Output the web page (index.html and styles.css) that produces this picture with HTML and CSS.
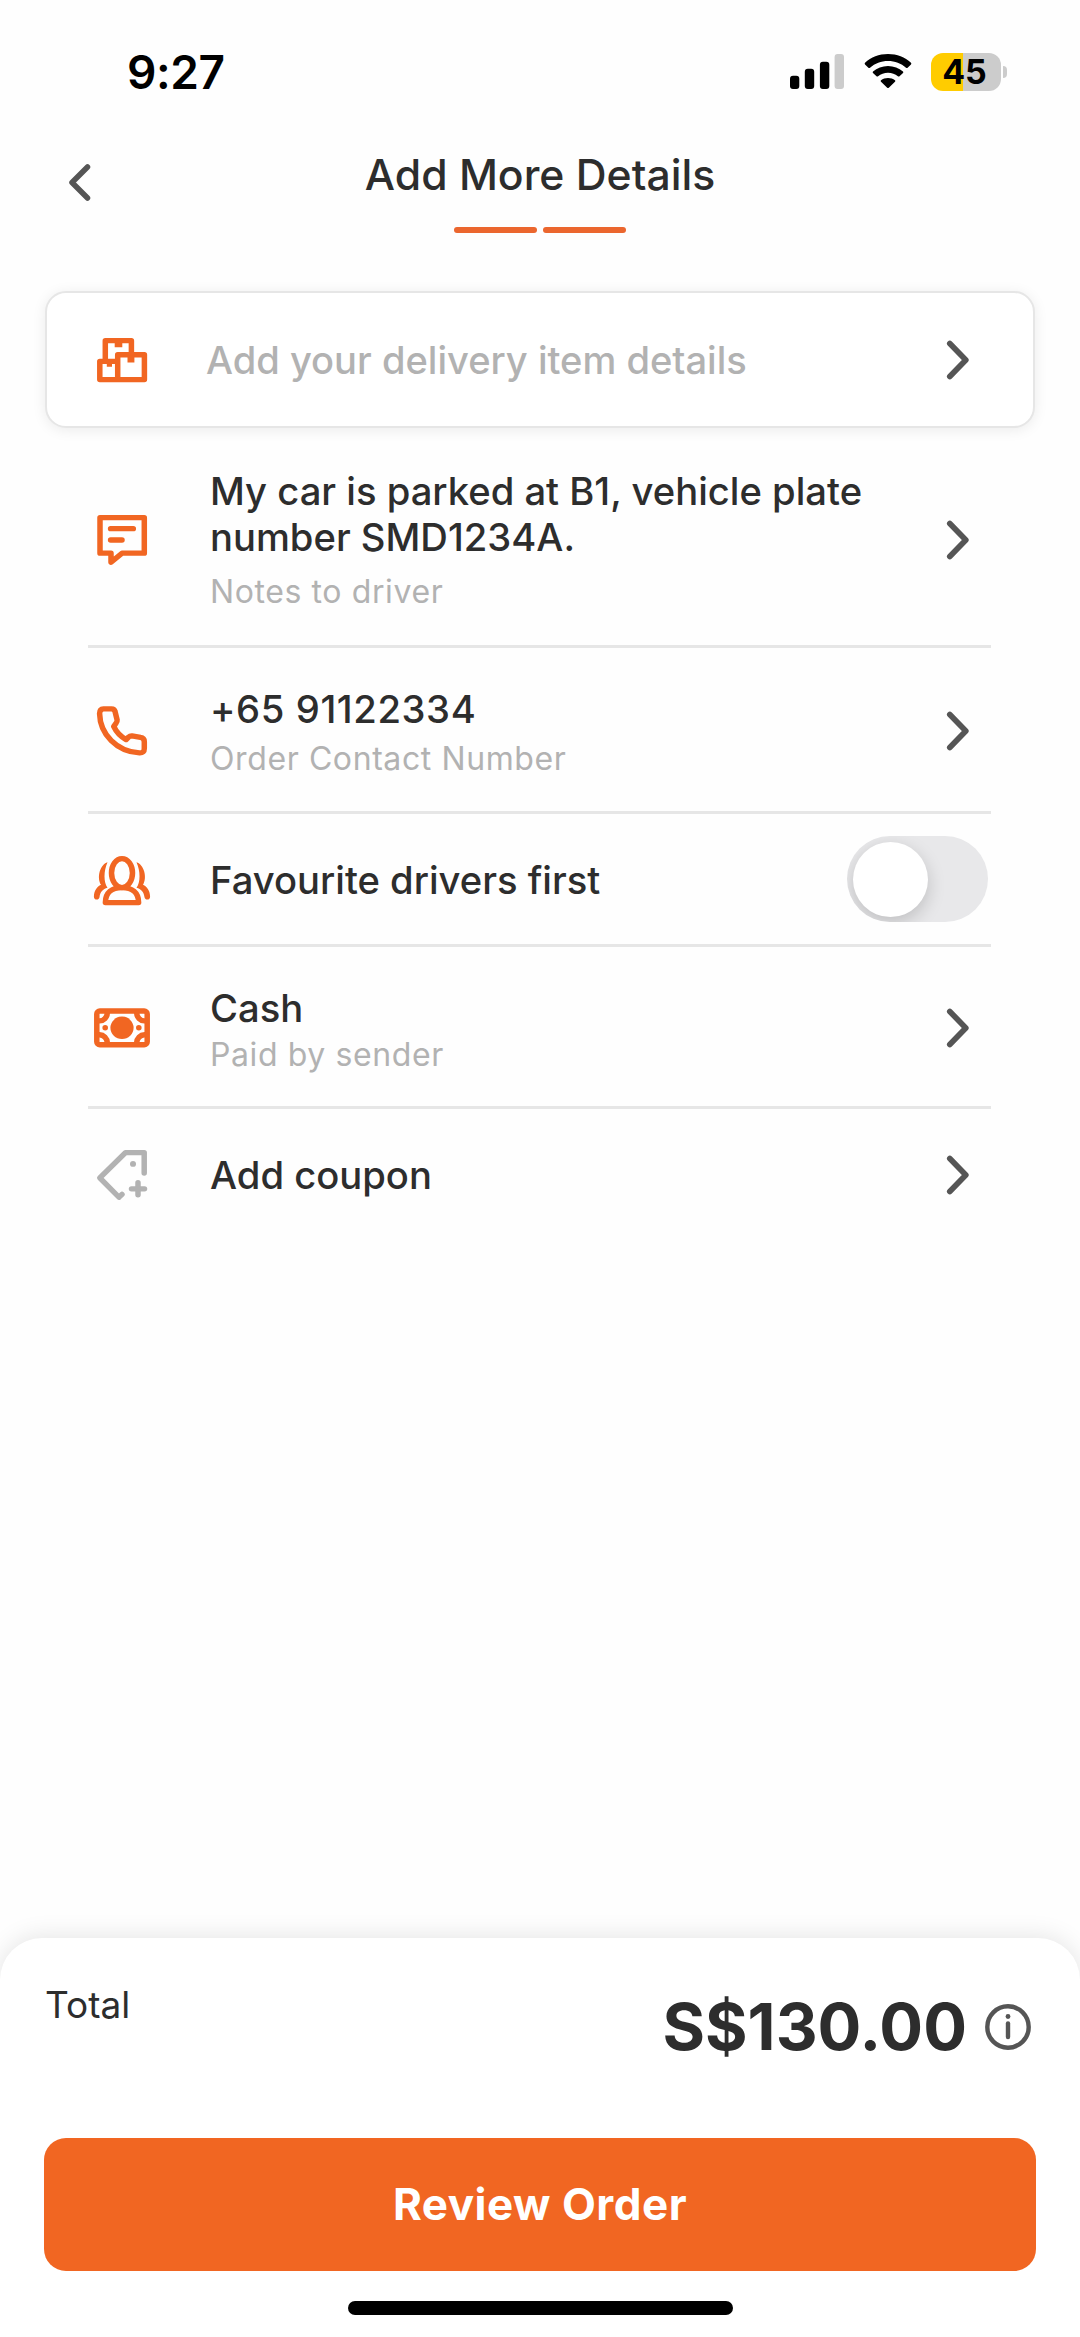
FILE: index.html
```html
<!DOCTYPE html>
<html lang="en">
<head>
<meta charset="utf-8">
<title>Add More Details</title>
<link rel="stylesheet" href="styles.css">
</head>
<body>
<div class="screen">
  <div class="status-bar">
    <span class="clock">9:27</span>
    <div class="status-icons">
      <svg class="signal" viewBox="0 0 54 35"><rect x="0" y="21.700" width="9.3" height="13.300" rx="3"/><rect x="14.8" y="14.700" width="9.4" height="20.300" rx="3"/><rect x="29.9" y="7.700" width="9.4" height="27.300" rx="3"/><rect class="dim" x="44.6" y="0" width="9.4" height="35" rx="3"/></svg>
      <svg class="wifi" viewBox="0 0 48 37" preserveAspectRatio="none"><path d="M24 0C15 0 7 3.4 1 9.300Q.3 10.200 1 11L4.400 14.500Q5.200 15.100 6 14.500C11 9.800 17 7.300 24 7.300S37 9.800 42 14.500Q42.800 15.100 43.600 14.500L47 11Q47.700 10.200 47 9.300C41 3.400 33 0 24 0Z"/><path d="M24 12.700C18.300 12.700 13 14.900 9 18.600Q8.300 19.400 9 20.200L12.500 23.600Q13.300 24.200 14.100 23.600C16.800 21.100 20.200 19.800 24 19.800S31.200 21.100 33.900 23.600Q34.700 24.200 35.500 23.600L39 20.200Q39.700 19.400 39 18.600C35 14.900 29.700 12.700 24 12.700Z"/><path d="M24 25.300C21.300 25.300 18.900 26.200 17 27.800Q16.200 28.600 17 29.400L23.200 35.700Q24 36.400 24.800 35.700L31 29.400Q31.800 28.600 31 27.800C29.100 26.200 26.700 25.300 24 25.300Z"/></svg>
      <div class="battery"><span>45</span></div>
      <div class="battery-tip"></div>
    </div>
  </div>

  <header class="header">
    <svg class="back" viewBox="0 0 22 37"><path d="M18.500 3 3 18.500 18.500 34"/></svg>
    <div class="heading">
      <h1>Add More Details</h1>
      <div class="steps"><i></i><i></i></div>
    </div>
  </header>

  <section class="card">
    <svg class="icon" viewBox="0 0 60 60" preserveAspectRatio="none"><path d="M13.300 31V10H39.400V24M24 31.400H7.800V50.300H52.400V24.600H25.700V50"/><path class="solid" d="M22.700 10H30.300V16.700H22.700ZM35.500 25H42.400V32.500H35.500ZM14.800 31H20V37H14.800Z"/></svg>
    <span class="prompt">Add your delivery item details</span>
    <svg class="chevron" viewBox="0 0 24 40"><path d="M3.800 3.500 19.800 20 3.800 36.500"/></svg>
  </section>

  <main class="list">
    <div class="row notes">
      <svg class="icon" viewBox="0 0 60 60" preserveAspectRatio="none"><path d="M8 6.800H52.300V43.600H30L19 53V43.600H8ZM18.600 18.300H41.300M18.600 30H30"/></svg>
      <div class="text"><p>My car is parked at B1, vehicle plate<br>number SMD1234A.</p><small>Notes to driver</small></div>
      <svg class="chevron" viewBox="0 0 24 40"><path d="M3.800 3.500 19.800 20 3.800 36.500"/></svg>
    </div>
    <div class="row phone">
      <svg class="icon" viewBox="0 0 60 60" preserveAspectRatio="none"><path d="M7.600 12Q7.600 7.400 11.500 7.200H19.500Q22.500 7.200 23 9.800L25.100 18.500Q25.300 20.500 24 22L21.700 25.300C24.500 31.500 29 36 34.100 38.900L36.500 36.300Q38 34.900 40 35.100L48.500 36.700Q52.300 37.300 52.300 41V48Q52.300 52.900 47.500 52.700C25 51.500 8 33.500 7.600 12Z"/></svg>
      <div class="text"><p>+65 91122334</p><small>Order Contact Number</small></div>
      <svg class="chevron" viewBox="0 0 24 40"><path d="M3.800 3.500 19.800 20 3.800 36.500"/></svg>
    </div>
    <div class="row drivers">
      <svg class="icon" viewBox="0 0 60 60" preserveAspectRatio="none"><ellipse cx="30" cy="21.800" rx="10.500" ry="15"/><path d="M13.400 52.300C13.400 42 20 36.800 30 36.800S46.600 42 46.600 52.300Z"/><path class="solid" d="M15.500 10.500C8 13 4.500 26 9 34C5 36 2 40 1.900 46.500C2 49.500 6.700 50.500 7.500 46.800C8 41.500 11 38.500 15.500 37C11.500 31 11.500 20 15.500 10.500ZM44.500 10.500C52 13 55.500 26 51 34C55 36 58 40 58.100 46.500C58 49.500 53.300 50.500 52.500 46.800C52 41.500 49 38.500 44.500 37C48.500 31 48.500 20 44.500 10.500Z"/></svg>
      <div class="text"><p>Favourite drivers first</p></div>
      <div class="toggle"><span></span></div>
    </div>
    <div class="row payment">
      <svg class="icon" viewBox="0 0 60 60" preserveAspectRatio="none"><rect x="4.800" y="12.400" width="50.400" height="34.900" rx="3"/><path d="M15.300 14.500A8 8.500 0 0 1 7.500 22.700M44.700 14.500A8 8.500 0 0 0 52.500 22.700M15.300 45.200A8 8.500 0 0 0 7.500 37M44.700 45.200A8 8.500 0 0 1 52.500 37"/><circle class="solid" cx="30" cy="29.800" r="11.600"/><circle class="solid" cx="13.200" cy="29.800" r="2.800"/><circle class="solid" cx="46.800" cy="29.800" r="2.800"/></svg>
      <div class="text"><p>Cash</p><small>Paid by sender</small></div>
      <svg class="chevron" viewBox="0 0 24 40"><path d="M3.800 3.500 19.800 20 3.800 36.500"/></svg>
    </div>
    <div class="row coupon">
      <svg class="icon muted" viewBox="0 0 60 60" preserveAspectRatio="none"><path d="M52.200 28V6.800H33.500L7.800 33 27 53 30 50M46 38V50.500M39.500 44.300H52.500"/><circle class="solid" cx="41" cy="18.500" r="3"/></svg>
      <div class="text"><p>Add coupon</p></div>
      <svg class="chevron" viewBox="0 0 24 40"><path d="M3.800 3.500 19.800 20 3.800 36.500"/></svg>
    </div>
  </main>

  <footer class="sheet">
    <div class="total">
      <span class="total-label">Total</span>
      <div class="amount">
        <strong>S$130.00</strong>
        <svg class="info" viewBox="0 0 46 46"><circle cx="23" cy="23" r="20.700"/><path d="M23 19.500V33"/><circle class="dot" cx="23" cy="12.500" r="2.400"/></svg>
      </div>
    </div>
    <button class="review">Review Order</button>
    <div class="home-bar"></div>
  </footer>
</div>
</body>
</html>
```
FILE: styles.css
```css
* { box-sizing: border-box; }
body { margin: 0; background: #fefefe; font-family: Inter, "Liberation Sans", sans-serif; color: #2d2d2d; }
p, h1 { margin: 0; }
svg { display: block; flex: none; }

.screen { width: 1080px; height: 2337px; display: flex; flex-direction: column; overflow: hidden; }

.status-bar { height: 143px; padding: 0 73px 0 127px; display: flex; justify-content: space-between; align-items: center; color: #000; }
.clock { font-size: 46px; font-weight: 600; letter-spacing: -0.4px; }
.status-icons { display: flex; align-items: center; }
.signal { width: 54px; height: 35px; margin-right: 20px; }
.signal .dim { fill: #ccc; }
.wifi { width: 48px; height: 35px; margin-right: 19px; }
.battery { width: 70px; height: 38px; border-radius: 12px; background: linear-gradient(90deg, #ffcc00 32px, #ccc 32px); display: flex; align-items: center; justify-content: center; font-size: 34px; font-weight: 700; padding-right: 3px; }
.battery-tip { width: 4px; height: 12px; margin-left: 2px; background: #ccc; border-radius: 0 4px 4px 0; }

.header { height: 148px; padding: 0 69px; display: flex; align-items: flex-start; }
.back { width: 22px; height: 37px; margin-top: 21px; fill: none; stroke: #555; stroke-width: 5.500; stroke-linecap: round; stroke-linejoin: round; }
.heading { flex: 1; margin-right: 22px; display: flex; flex-direction: column; align-items: center; }
h1 { font-size: 42.7px; line-height: 60px; margin-top: 2px; font-weight: 500; }
.steps { display: flex; gap: 6px; margin-top: 22px; }
.steps i { width: 83px; height: 6px; border-radius: 3px; background: #eb662e; }

.icon { width: 60px; height: 58px; fill: none; stroke: #f16622; stroke-width: 5.500; stroke-linecap: round; stroke-linejoin: round; }
.icon .solid { fill: #f16622; stroke: none; }
.icon.muted { stroke: #b2b2b2; }
.icon.muted .solid { fill: #b2b2b2; }
.chevron { width: 24px; height: 40px; fill: none; stroke: #555; stroke-width: 5.700; stroke-linecap: round; stroke-linejoin: round; }

.card { height: 137px; margin: 0 45px; padding: 0 63px 0 45px; display: flex; align-items: center; background: #fff; border: 2px solid #e6e6e6; border-radius: 21px; box-shadow: 0 2px 14px rgba(0, 0, 0, .08); }
.prompt { flex: 1; margin-left: 54px; font-size: 38.1px; font-weight: 500; color: #b2b2b2; }

.list { flex: 1; margin: 0 89px 0 88px; }
.row { display: flex; align-items: center; padding: 0 21px 0 4px; border-bottom: 3px solid #e6e6e6; }
.text { flex: 1; margin-left: 58px; }
.text p { font-size: 38.2px; line-height: 46px; font-weight: 500; }
.text small { display: block; font-size: 32px; line-height: 40px; letter-spacing: .6px; color: #b2b2b2; }
.notes { height: 213px; margin-top: 7px; }
.notes small { margin-top: 12px; }
.phone { height: 166px; padding-top: 2px; }
.phone .text { padding-top: 3px; }
.phone p { letter-spacing: .6px; }
.phone small { margin-top: 7px; }
.drivers { height: 133px; padding-right: 3px; }
.drivers .icon { margin-top: 3px; }
.drivers .text { padding-top: 2px; }
.payment { height: 162px; padding-top: 3px; }
.payment .text { padding-top: 4px; }
.payment small { margin-top: 4px; }
.coupon { height: 132px; border: 0; }

.toggle { width: 141px; height: 86px; padding: 5.500px 6px; border-radius: 43px; background: #e8e8ea; overflow: hidden; }
.toggle span { display: block; width: 75px; height: 75px; border-radius: 50%; background: #fff; box-shadow: 0 6px 18px rgba(0, 0, 0, .18); }

.sheet { height: 399px; padding: 0 44px; background: #fff; border-radius: 42px 42px 0 0; box-shadow: 0 -2px 24px rgba(0, 0, 0, .1); }
.total { height: 200px; display: flex; justify-content: space-between; }
.total-label { margin: 42px 0 0 1px; font-size: 37px; line-height: 50px; }
.amount { display: flex; align-items: center; height: 80px; margin-top: 49px; padding-right: 5px; gap: 18px; }
.amount strong { font-size: 65px; line-height: 80px; font-weight: 700; }
.info { width: 46px; height: 46px; fill: none; stroke: #555; stroke-width: 4.400; stroke-linecap: round; }
.info .dot { fill: #555; stroke: none; }
.review { display: block; width: 992px; height: 133px; border: 0; border-radius: 22px; background: #f16622; color: #fff; font: 700 44px/130px Inter, "Liberation Sans", sans-serif; letter-spacing: .5px; padding: 0 0 1px; }
.home-bar { width: 385px; height: 14px; margin: 30px auto 0; border-radius: 7px; background: #000; }
```
